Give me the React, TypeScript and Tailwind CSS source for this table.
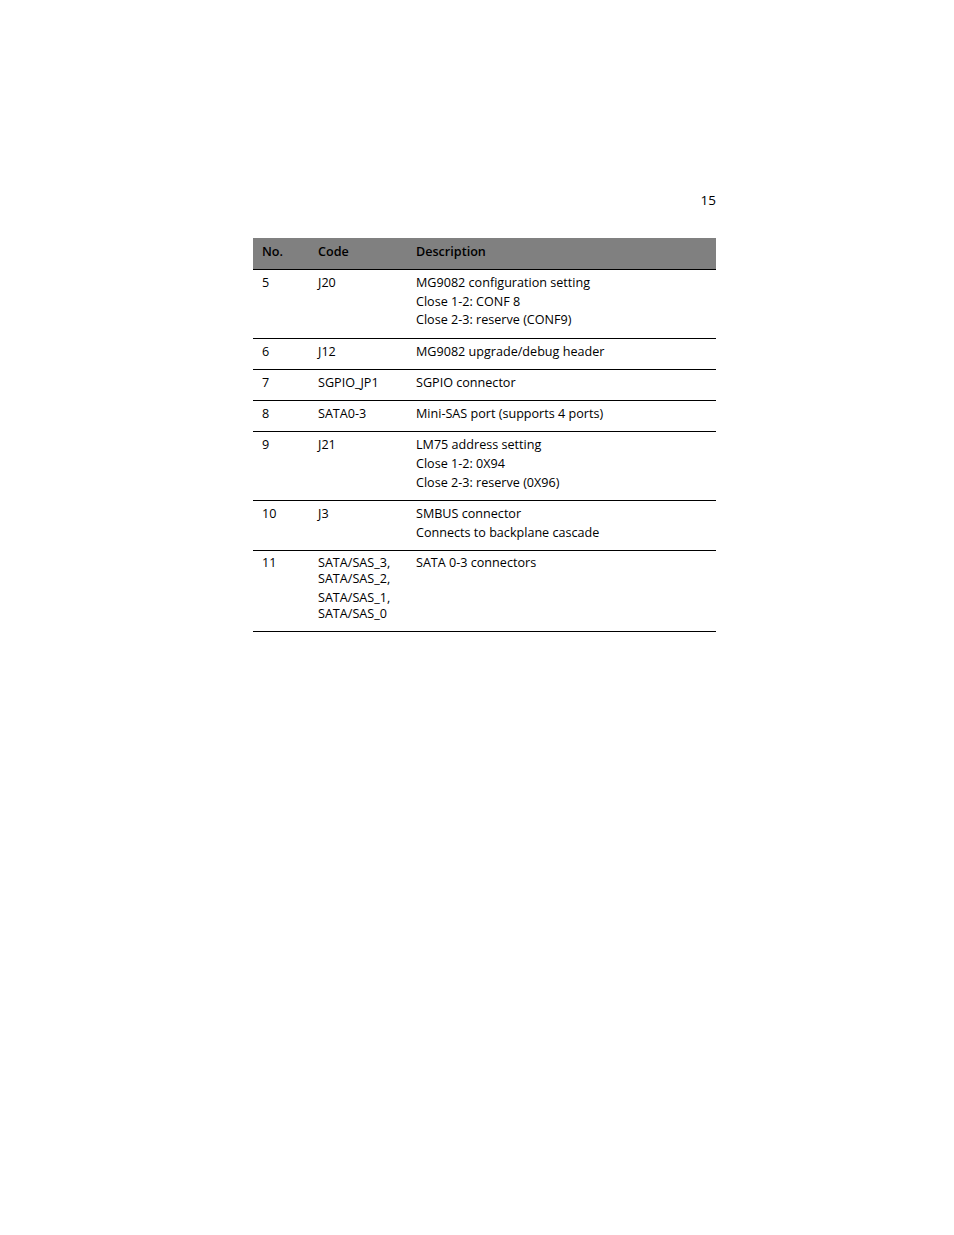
const rows: { no: string; code: string; desc: string[] }[] = [
  {
    no: "5",
    code: "J20",
    desc: ["MG9082 configuration setting", "Close 1-2: CONF 8", "Close 2-3: reserve (CONF9)"],
  },
  { no: "6", code: "J12", desc: ["MG9082 upgrade/debug header"] },
  { no: "7", code: "SGPIO_JP1", desc: ["SGPIO connector"] },
  { no: "8", code: "SATA0-3", desc: ["Mini-SAS port (supports 4 ports)"] },
  {
    no: "9",
    code: "J21",
    desc: ["LM75 address setting", "Close 1-2: 0X94", "Close 2-3: reserve (0X96)"],
  },
  { no: "10", code: "J3", desc: ["SMBUS connector", "Connects to backplane cascade"] },
];

function rowClass(lines: number) {
  if (lines === 3) return "flex border-t border-black pb-[8px] pt-[4px] text-[12.6px] leading-[18.7px]";
  if (lines === 2) return "flex border-t border-black pb-[8px] pt-[4px] text-[12.6px] leading-[18.5px]";
  return "flex border-t border-black pb-[8px] pt-[4px] text-[12.6px] leading-[18px]";
}

function App() {
  return (
    <div
      className="min-h-[1235px] w-full bg-white text-black"
      style={{ fontFamily: '"Open Sans", "Noto Sans", sans-serif' }}
    >
      <div className="ml-[253px] w-[463px] pt-[190px]">
        <div className="text-right text-[13.5px] leading-[20px]">15</div>
        <div className="mt-[28px]">
          <div className="flex h-[31px] items-center bg-[#808080] pb-[2px] text-[12.6px] font-semibold">
            <div className="w-[56px] pl-[9px]">No.</div>
            <div className="w-[98px] pl-[9px]">Code</div>
            <div className="flex-1 pl-[9px]">Description</div>
          </div>
          {rows.map((row) => (
            <div key={row.no} className={rowClass(row.desc.length)}>
              <div className="w-[56px] pl-[9px]">{row.no}</div>
              <div className="w-[98px] pl-[9px]">{row.code}</div>
              <div className="flex-1 pl-[9px]">
                {row.desc.map((line) => (
                  <div key={line}>{line}</div>
                ))}
              </div>
            </div>
          ))}
          <div className="flex border-t border-b border-black pb-[9px] pt-[4px] text-[12.6px] leading-[16px]">
            <div className="w-[56px] pl-[9px]">11</div>
            <div className="w-[98px] pl-[9px]">
              <div>SATA/SAS_3,</div>
              <div>SATA/SAS_2,</div>
              <div className="mt-[3px]">SATA/SAS_1,</div>
              <div>SATA/SAS_0</div>
            </div>
            <div className="flex-1 pl-[9px]">SATA 0-3 connectors</div>
          </div>
        </div>
      </div>
    </div>
  );
}

export default App;
